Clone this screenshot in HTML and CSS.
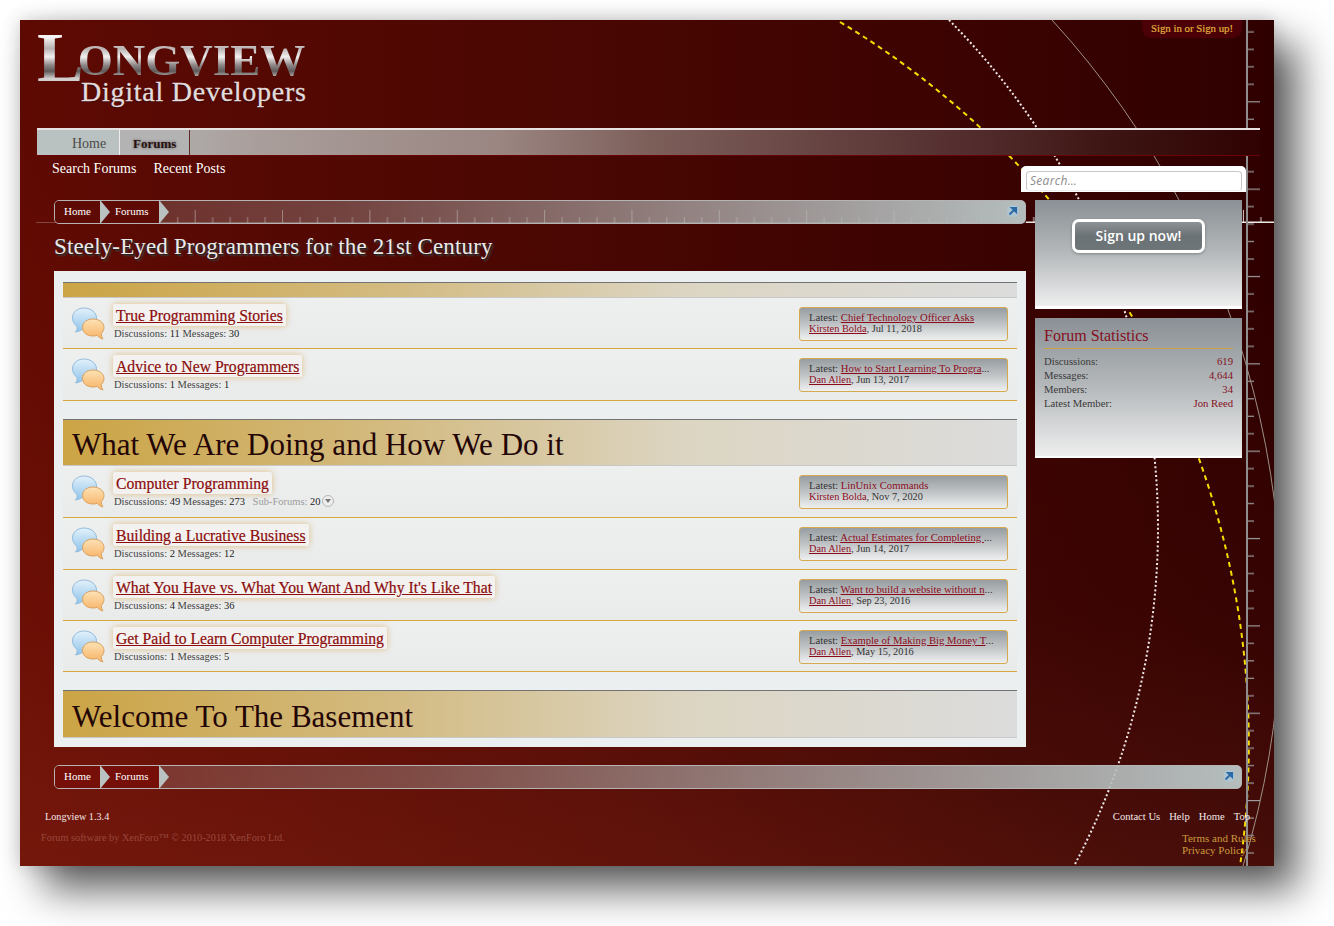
FILE: index.html
```html
<!DOCTYPE html>
<html lang="en">
<head>
<meta charset="utf-8">
<title>Longview Digital Developers</title>
<link rel="stylesheet" href="styles.css">
</head>
<body>
<div class="window">
  <svg class="art" viewBox="20 20 1254 846" width="1254" height="846" aria-hidden="true">
    <defs>
      <pattern id="hticks" patternUnits="userSpaceOnUse" x="20" y="205" width="87.35" height="18">
        <rect x="0" y="5" width="1" height="13" fill="#d8d0d0"/>
        <rect x="17.47" y="12" width="1" height="6" fill="#d8d0d0"/>
        <rect x="34.94" y="12" width="1" height="6" fill="#d8d0d0"/>
        <rect x="52.41" y="12" width="1" height="6" fill="#d8d0d0"/>
        <rect x="69.88" y="12" width="1" height="6" fill="#d8d0d0"/>
      </pattern>
      <pattern id="vticks" patternUnits="userSpaceOnUse" x="1248" y="101.2" width="14" height="87.35">
        <rect x="0" y="0" width="12" height="1.2" fill="#9c9a9a"/>
        <rect x="0" y="17.47" width="6" height="1.2" fill="#9c9a9a"/>
        <rect x="0" y="34.94" width="6" height="1.2" fill="#9c9a9a"/>
        <rect x="0" y="52.41" width="6" height="1.2" fill="#9c9a9a"/>
        <rect x="0" y="69.88" width="6" height="1.2" fill="#9c9a9a"/>
      </pattern>
    </defs>
    <path d="M1052 20A874 874 0 0 1 1243 866" fill="none" stroke="#9c9186" stroke-width="1"/>
    <path d="M949 20A722 722 0 0 1 1074 866" fill="none" stroke="#efe8e8" stroke-width="2" stroke-dasharray="2 2.4"/>
    <path d="M840 22A842.5 842.5 0 0 1 1240 866" fill="none" stroke="#f6dc00" stroke-width="2" stroke-dasharray="5 4"/>
    <rect x="176" y="205" width="850" height="18" fill="url(#hticks)" opacity=".5"/>
    <rect x="1026" y="205" width="248" height="18" fill="url(#hticks)"/>
    <rect x="36" y="222" width="990" height="1" fill="#d8d0d0" opacity=".3"/>
    <rect x="1026" y="221.500" width="248" height="1.500" fill="#eeeaea"/>
    <rect x="1246" y="20" width="2" height="846" fill="#8f8d8d"/>
    <rect x="1248" y="20" width="14" height="846" fill="url(#vticks)"/>
  </svg>

  <svg class="defs" width="0" height="0" aria-hidden="true">
    <defs>
      <linearGradient id="blue" x1="0" y1="0" x2="0" y2="1"><stop offset="0" stop-color="#e2f1fb"/><stop offset="1" stop-color="#8fc3ea"/></linearGradient>
      <linearGradient id="orange" x1="0" y1="0" x2="0" y2="1"><stop offset="0" stop-color="#fde2b6"/><stop offset="1" stop-color="#f7b264"/></linearGradient>
      <symbol id="bubbles" viewBox="0 0 34 35">
        <path d="M13 2C6 2 1.500 6.500 1.500 12C1.500 15.500 3.500 18.500 6 20.500C6.500 22.500 6 24 4.500 26C8 25.500 10.500 24 12.500 22.500C19.500 23 25.500 18.500 25.500 12C25.500 6.500 20 2 13 2Z" fill="url(#blue)" stroke="#93bcdc" stroke-width="1"/>
        <path d="M22 13C16 13 11.500 16.500 11.500 21.500C11.500 26.500 16 30 22 30C23.500 30 25 29.800 26 29.300C27.500 31 29.500 32.500 32 33C31 31.500 30.300 29.800 30.300 27.500C32 25.800 33 23.800 33 21.500C33 16.500 28 13 22 13Z" fill="url(#orange)" stroke="#d9a15e" stroke-width="1"/>
      </symbol>
    </defs>
  </svg>

  <a class="signin">Sign in or Sign up!</a>

  <header class="logo">
    <div class="logo-main"><span class="l1">L</span><span class="l2">ONGVIEW</span></div>
    <div class="logo-sub">Digital Developers</div>
  </header>

  <nav class="nav">
    <a class="tab home">Home</a>
    <a class="tab forums">Forums</a>
  </nav>

  <div class="subnav">
    <div class="sublinks"><a>Search Forums</a><a>Recent Posts</a></div>
    <div class="search"><div class="search-input">Search…</div></div>
  </div>

  <div class="main">
    <div class="col">
      <div class="crumbs">
        <a class="crumb">Home</a><a class="crumb">Forums</a>
        <span class="jump"><svg width="10" height="10" viewBox="0 0 10 10"><path d="M1.500 8.500L6 4M3.800 1.800H8.200V6.200Z" fill="#2a6aa8" stroke="#2a6aa8" stroke-width="1.800"/></svg></span>
      </div>
      <h1 class="page-title">Steely-Eyed Programmers for the 21st Century</h1>
      <div class="panel">
        <div class="cat thin"></div>
        <div class="row">
          <svg class="bub"><use href="#bubbles"/></svg>
          <div class="info"><h3 class="title"><a class="u">True Programming Stories</a></h3><div class="meta">Discussions: <b>11</b> Messages: <b>30</b></div></div>
          <div class="last"><div class="trunc">Latest: <a class="u">Chief Technology Officer Asks</a></div><div><a class="u">Kirsten Bolda</a>, Jul 11, 2018</div></div>
        </div>
        <div class="row tall-row">
          <svg class="bub"><use href="#bubbles"/></svg>
          <div class="info"><h3 class="title"><a class="u">Advice to New Programmers</a></h3><div class="meta">Discussions: <b>1</b> Messages: <b>1</b></div></div>
          <div class="last"><div class="trunc">Latest: <a class="u">How to Start Learning To Progra</a>...</div><div><a class="u">Dan Allen</a>, Jun 13, 2017</div></div>
        </div>

        <h2 class="cat gap">What We Are Doing and How We Do it</h2>
        <div class="row tall-row">
          <svg class="bub"><use href="#bubbles"/></svg>
          <div class="info"><h3 class="title"><a>Computer Programming</a></h3><div class="meta">Discussions: <b>49</b> Messages: <b>273</b> <span class="sub">Sub-Forums:</span> <b>20</b><span class="more"></span></div></div>
          <div class="last"><div class="trunc">Latest: <a>LinUnix Commands</a></div><div><a>Kirsten Bolda</a>, Nov 7, 2020</div></div>
        </div>
        <div class="row tall-row">
          <svg class="bub"><use href="#bubbles"/></svg>
          <div class="info"><h3 class="title"><a class="u">Building a Lucrative Business</a></h3><div class="meta">Discussions: <b>2</b> Messages: <b>12</b></div></div>
          <div class="last"><div class="trunc">Latest: <a class="u">Actual Estimates for Completing </a>...</div><div><a class="u">Dan Allen</a>, Jun 14, 2017</div></div>
        </div>
        <div class="row">
          <svg class="bub"><use href="#bubbles"/></svg>
          <div class="info"><h3 class="title"><a class="u">What You Have vs. What You Want And Why It's Like That</a></h3><div class="meta">Discussions: <b>4</b> Messages: <b>36</b></div></div>
          <div class="last"><div class="trunc">Latest: <a class="u">Want to build a website without n</a>...</div><div><a class="u">Dan Allen</a>, Sep 23, 2016</div></div>
        </div>
        <div class="row">
          <svg class="bub"><use href="#bubbles"/></svg>
          <div class="info"><h3 class="title"><a class="u">Get Paid to Learn Computer Programming</a></h3><div class="meta">Discussions: <b>1</b> Messages: <b>5</b></div></div>
          <div class="last"><div class="trunc">Latest: <a class="u">Example of Making Big Money T</a>...</div><div><a class="u">Dan Allen</a>, May 15, 2016</div></div>
        </div>

        <h2 class="cat gap tall">Welcome To The Basement</h2>
      </div>
    </div>

    <aside class="side">
      <div class="box signup"><a class="btn">Sign up now!</a></div>
      <div class="box stats">
        <h3 class="stats-head">Forum Statistics</h3>
        <dl class="stat"><dt>Discussions:</dt><dd>619</dd></dl>
        <dl class="stat"><dt>Messages:</dt><dd>4,644</dd></dl>
        <dl class="stat"><dt>Members:</dt><dd>34</dd></dl>
        <dl class="stat"><dt>Latest Member:</dt><dd>Jon Reed</dd></dl>
      </div>
    </aside>
  </div>

  <div class="crumbs bottom">
    <a class="crumb">Home</a><a class="crumb">Forums</a>
    <span class="jump"><svg width="10" height="10" viewBox="0 0 10 10"><path d="M1.500 8.500L6 4M3.800 1.800H8.200V6.200Z" fill="#2a6aa8" stroke="#2a6aa8" stroke-width="1.800"/></svg></span>
  </div>

  <footer class="footer">
    <div class="foot-row first">
      <div class="version">Longview 1.3.4</div>
      <div class="foot-links"><a>Contact Us</a><a>Help</a><a>Home</a><a>Top</a></div>
    </div>
    <div class="foot-row second">
      <div class="copy">Forum software by XenForo™ © 2010-2018 XenForo Ltd.</div>
      <div class="legal"><a>Terms and Rules</a><a>Privacy Policy</a></div>
    </div>
  </footer>
</div>
</body>
</html>
```

FILE: styles.css
```css
* { box-sizing: border-box; }
html, body { margin: 0; padding: 0; background: #fff; }
body { width: 1334px; height: 926px; overflow: hidden; padding: 20px; font-family: "Liberation Serif", serif; }
h1, h2, h3, dl, dd, dt { margin: 0; padding: 0; font-weight: normal; }

.window {
  position: relative;
  isolation: isolate;
  width: 1254px;
  height: 846px;
  padding: 0 32px 0 34px;
  background:
    linear-gradient(to top, rgba(125, 45, 30, .3) 0, rgba(125, 45, 30, .08) 30%, rgba(125, 45, 30, 0) 70%),
    linear-gradient(to top right, rgba(140, 20, 5, .4) 0, rgba(140, 20, 5, 0) 45%),
    linear-gradient(to right, #5e0a03 0%, #470602 50%, #2f0000 100%);
  box-shadow: 24px 24px 38px rgba(0, 0, 0, .62), 0 0 18px rgba(0, 0, 0, .2);
}
.art { position: absolute; left: 0; top: 0; z-index: -1; }
.defs { position: absolute; }

.signin {
  position: absolute; right: 32px; top: 0;
  width: 100px; height: 18px;
  background: #4a0006; border-radius: 0 0 9px 9px;
  color: #e2b03e; font-size: 10.800px; line-height: 16px; text-align: center;
  -webkit-text-stroke: .2px #e2b03e;
}

.logo { position: relative; height: 108px; margin-left: -17px; padding-top: 8px; }
.logo-main {
  height: 60px; line-height: 60px; white-space: nowrap; font-weight: bold;
  background: linear-gradient(to bottom, #f5f3f3 16%, #b9b2b2 34%, #f2f0f0 48%, #8e8686 62%, #5f5959 72%, #d2cfcf 84%);
  -webkit-background-clip: text; background-clip: text; color: transparent;
  width: 280px;
}
.l1 { font-size: 70px; letter-spacing: -6px; vertical-align: -6px; }
.l2 { font-size: 45px; }
.logo-sub { margin: -11px 0 0 44px; font-size: 28px; line-height: 30px; color: #e2dcdc; letter-spacing: .75px; text-shadow: 0 1px 1px #2a0000; -webkit-text-stroke: .3px #e2dcdc; }

.nav {
  position: relative; height: 28px; width: 1223px; margin-left: -17px;
  display: flex;
  border-top: 2px solid #e6e2e2;
  border-bottom: 1px solid #6a0007;
  background: linear-gradient(to right, #b9c1c1 0%, #a99e9b 18%, #9a8581 38%, #7d5f5a 50%, #50292a 78%, #3c1512 88%, #300202 100%);
}
.tab { height: 25px; font-size: 14px; line-height: 27px; }
.home { width: 83px; padding-left: 35px; color: #4c4a4a; background: #b9c1c1; border-right: 1px solid #efeded; }
.forums { width: 70px; padding-left: 13px; color: #2a1010; font-size: 13px; line-height: 27px; font-weight: bold; background: #b4b3b3; border-right: 1px solid #5e2a28; text-shadow: 0 0 3px #555; }

.subnav { display: flex; justify-content: space-between; height: 44px; margin-left: -2px; margin-right: -4px; }
.sublinks { display: flex; gap: 17px; padding-top: 4px; color: #fff; font-size: 14px; line-height: 18px; }
.search { width: 225px; height: 26px; margin-top: 10px; padding: 5px 4px 1px 5px; background: #fff; border-radius: 5px 5px 0 0; }
.search-input {
  height: 20px; padding-left: 3px;
  border: 1px solid #c9c6c9; border-bottom-color: #eee; border-radius: 4px;
  font-family: "Open Sans", sans-serif; font-style: italic; font-size: 12px; line-height: 18px; color: #8c8c8c; letter-spacing: .3px;
}

.main { display: flex; gap: 9px; align-items: flex-start; }
.col { width: 972px; }
.side { width: 207px; }

.crumbs {
  position: relative; display: flex; height: 24px;
  border: 1px solid #b5b3b3; border-radius: 5px;
  background: linear-gradient(to right, rgba(185,193,193,.16) 0%, rgba(185,193,193,.32) 30%, rgba(185,193,193,.62) 60%, #b5bdbd 100%);
}
.crumb {
  position: relative; height: 22px; padding-left: 9px; width: 45px;
  background: #5f0b05; color: #fff; font-size: 11px; line-height: 21px;
}
.crumb:first-child { border-radius: 4px 0 0 4px; }
.crumb + .crumb { width: 59px; padding-left: 15px; }
.crumb::after {
  content: ""; position: absolute; left: 100%; top: -1px; z-index: 1;
  border-left: 10px solid #b9c1c1; border-top: 12px solid transparent; border-bottom: 12px solid transparent;
}
.jump {
  position: absolute; right: 6px; top: 4px; width: 12px; height: 12px;
  display: flex; align-items: center; justify-content: center;
  background: rgba(170, 205, 230, .55); border-radius: 6px;
}
.bottom { width: 1188px; margin-top: 18px; }
.bottom .crumb { background: #750f08; }

.page-title {
  height: 47px; font-size: 23px; letter-spacing: .14px; line-height: 46px; color: #ece9e9;
  text-shadow: 1px 1px 1px #222, 2px 2px 2px #444;
}

.panel { padding: 11px 9px 9px; background: #ecefef; }
.cat {
  margin: 0; height: 47px; padding-left: 9px;
  border-top: 1px solid #737373; border-bottom: 1px solid #c8c8c8;
  background: linear-gradient(to right, #cba445 0%, #d3bb82 35%, #dcd5c2 65%, #dcdcdc 100%);
  color: #230505; font-size: 31px; line-height: 49px; white-space: nowrap;
}
.thin { height: 16px; }
.gap { margin-top: 18px; }
.tall { height: 48px; line-height: 51px; }

.row {
  display: flex; align-items: flex-start; height: 51px;
  border-bottom: 1px solid #d8a83c;
  background: linear-gradient(to bottom, #eeefef, #e9ebeb);
}
.tall-row { height: 52px; }
.bub { width: 34px; height: 35px; margin: 8px 8px 0 8px; flex: none; }
.info { flex: 1; padding-top: 6px; }
.title {
  display: inline-block; height: 22px; padding: 0 3px;
  background: #f3f2f0; border-radius: 2px;
  box-shadow: 0 0 6px rgba(214, 170, 90, .7);
  color: #8c0c0c; font-size: 15.700px; line-height: 23px; white-space: nowrap;
  -webkit-text-stroke: .2px #8c0c0c;
}
.u { text-decoration: underline; }
.meta { margin-top: 1px; padding-left: 1px; font-size: 10.500px; line-height: 14px; color: #444; }
.meta b { font-weight: normal; color: #222; }
.sub { margin-left: 5px; color: #9a9a9a; }
.more {
  display: inline-block; position: relative; width: 12px; height: 12px; margin-left: 1px; vertical-align: -2px;
  border: 1px solid #b5b5b5; border-radius: 50%; background: #eee;
}
.more::after {
  content: ""; position: absolute; left: 2px; top: 3px;
  border-top: 4px solid #777; border-left: 3px solid transparent; border-right: 3px solid transparent;
}
.last {
  flex: none; width: 209px; height: 34px; margin: 9px 9px 0 0; padding: 3px 4px 0 9px;
  border: 1px solid #d5aa4e; border-radius: 3px;
  background: linear-gradient(to bottom, #979da1 0%, #c0c3c5 50%, #eef0f0 100%);
  color: #333; font-size: 10.300px; line-height: 12px;
}
.last a { color: #8c0c1c; }
.trunc { font-size: 10.700px; white-space: nowrap; overflow: hidden; }

.box { width: 207px; background: linear-gradient(to bottom, #8a9095 0%, #b5b9bb 50%, #eeeeee 100%); border-bottom: 1px solid #fff; }
.signup { height: 109px; padding: 19px 0 0 37px; border-bottom-width: 3px; }
.btn {
  display: block; width: 133px; height: 34px;
  border: 3px solid #fff; border-radius: 7px;
  background: linear-gradient(to bottom, #8c9295 0%, #6b7276 50%, #6e7578 100%);
  box-shadow: 0 1px 3px rgba(0,0,0,.3);
  color: #fff; font-family: "Open Sans", sans-serif; font-weight: 600; font-size: 14px; line-height: 28px; text-align: center;
}
.stats { height: 140px; margin-top: 9px; padding: 9px 9px 0; border-bottom-width: 2px; }
.stats-head { height: 22px; font-size: 16px; line-height: 18px; color: #85101f; border-bottom: 1px solid #cba445; margin-bottom: 5px; }
.stat { display: flex; justify-content: space-between; height: 14px; font-size: 10.700px; line-height: 14px; color: #3a3a3a; }
.stat dd { color: #85101f; }

.footer { margin: 0 -13px; }
.foot-row { display: flex; justify-content: space-between; }
.first { padding: 21px 5px 0 4px; height: 43px; font-size: 10.600px; line-height: 14px; color: #f2e8e8; }
.version { font-size: 10.200px; }
.foot-links { display: flex; gap: 9px; }
.second { font-size: 11px; line-height: 12px; }
.copy { font-size: 10.300px; color: #96483d; }
.legal { display: flex; flex-direction: column; width: 73px; color: #cb9a3c; white-space: nowrap; }
```
